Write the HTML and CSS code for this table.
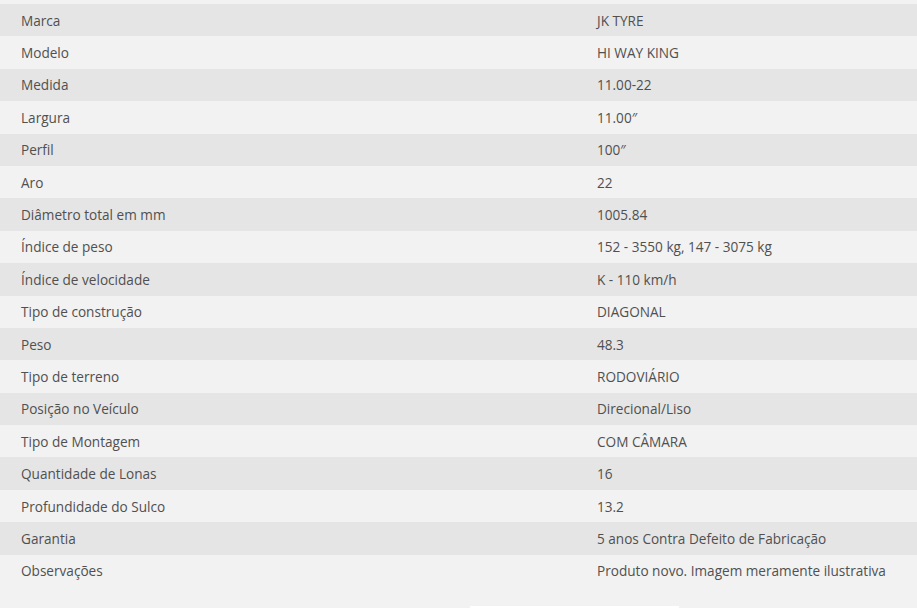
FILE: index.html
```html
<!DOCTYPE html>
<html lang="pt-BR">
<head>
<meta charset="utf-8">
<title>Especificações</title>
<link rel="stylesheet" href="styles.css">
</head>
<body>
<div class="page">
  <div class="specs">
    <div class="row"><div class="label">Marca</div><div class="value">JK TYRE</div></div>
    <div class="row"><div class="label">Modelo</div><div class="value">HI WAY KING</div></div>
    <div class="row"><div class="label">Medida</div><div class="value">11.00-22</div></div>
    <div class="row"><div class="label">Largura</div><div class="value">11.00″</div></div>
    <div class="row"><div class="label">Perfil</div><div class="value">100″</div></div>
    <div class="row"><div class="label">Aro</div><div class="value">22</div></div>
    <div class="row"><div class="label">Diâmetro total em mm</div><div class="value">1005.84</div></div>
    <div class="row"><div class="label">Índice de peso</div><div class="value">152 - 3550 kg, 147 - 3075 kg</div></div>
    <div class="row"><div class="label">Índice de velocidade</div><div class="value">K - 110 km/h</div></div>
    <div class="row"><div class="label">Tipo de construção</div><div class="value">DIAGONAL</div></div>
    <div class="row"><div class="label">Peso</div><div class="value">48.3</div></div>
    <div class="row"><div class="label">Tipo de terreno</div><div class="value">RODOVIÁRIO</div></div>
    <div class="row"><div class="label">Posição no Veículo</div><div class="value">Direcional/Liso</div></div>
    <div class="row"><div class="label">Tipo de Montagem</div><div class="value">COM CÂMARA</div></div>
    <div class="row"><div class="label">Quantidade de Lonas</div><div class="value">16</div></div>
    <div class="row"><div class="label">Profundidade do Sulco</div><div class="value">13.2</div></div>
    <div class="row"><div class="label">Garantia</div><div class="value">5 anos Contra Defeito de Fabricação</div></div>
    <div class="row"><div class="label">Observações</div><div class="value">Produto novo. Imagem meramente ilustrativa</div></div>
  </div>
  <div class="footer-tab"></div>
</div>
</body>
</html>
```

FILE: styles.css
```css
html, body {
  margin: 0;
  padding: 0;
  background: #f2f2f2;
}
.page {
  width: 917px;
  height: 608px;
  overflow: hidden;
  padding-top: 4px;
  box-sizing: border-box;
  display: flex;
  flex-direction: column;
  font-family: "Open Sans", "Liberation Sans", sans-serif;
  font-size: 13.6px;
  color: #505050;
}
.specs {
  display: flex;
  flex-direction: column;
}
.row {
  display: grid;
  grid-template-columns: 576px 1fr;
  height: 32.4px;
  align-items: center;
}
.row:nth-child(odd) {
  background: #e5e5e5;
}
.row:nth-child(even) {
  background: #f2f2f2;
}
.label, .value {
  padding-left: 21px;
  white-space: nowrap;
}
.footer-tab {
  margin-top: auto;
  margin-left: 470px;
  width: 209px;
  height: 2px;
  background: #ffffff;
}
```
